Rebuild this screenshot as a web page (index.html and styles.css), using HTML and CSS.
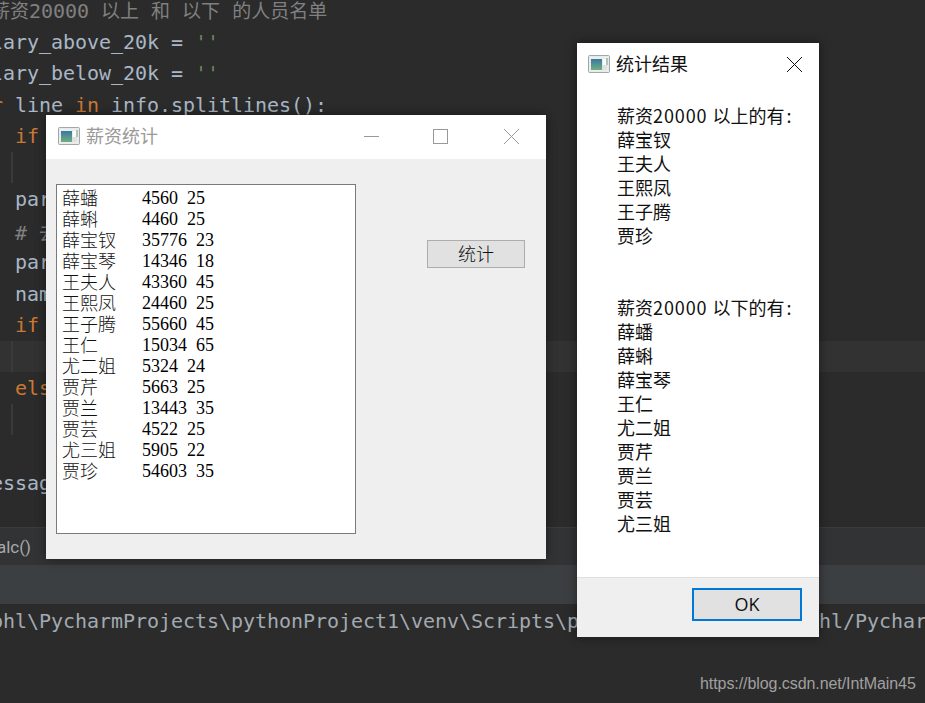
FILE: index.html
```html
<!DOCTYPE html>
<html lang="zh-CN">
<head>
<meta charset="utf-8">
<title>薪资统计</title>
<link rel="stylesheet" href="styles.css">
</head>
<body>
<svg class="defs" width="0" height="0" aria-hidden="true">
  <defs>
    <linearGradient id="qt-g" x1="0" y1="0" x2="0" y2="1">
      <stop offset="0" stop-color="#3a78a6"/>
      <stop offset="1" stop-color="#6fae7c"/>
    </linearGradient>
    <symbol id="qt-icon" viewBox="0 0 22 18">
      <rect x="0.5" y="0.5" width="21" height="17" rx="1" fill="#e9ebea" stroke="#a3a7a7"/>
      <rect x="2" y="2" width="18" height="14" fill="#eceeed"/>
      <rect x="3" y="4" width="11" height="11" fill="url(#qt-g)"/>
      <rect x="15" y="4" width="3" height="6" fill="#fbfbfb"/>
      <rect x="18.5" y="3" width="1" height="7" fill="#6d9a86"/>
      <rect x="14" y="10" width="5" height="5" fill="#dfe1e0"/>
    </symbol>
  </defs>
</svg>

<main class="ide">
  <section class="editor">
    <div class="ln ln-comment"><span class="cm"># <span class="cjk">薪资</span>20000 <span class="cjk">以上</span> <span class="cjk">和</span> <span class="cjk">以下</span> <span class="cjk">的人员名单</span></span></div>
    <div class="ln">salary_above_20k = <span class="st">''</span></div>
    <div class="ln">salary_below_20k = <span class="st">''</span></div>
    <div class="ln"><span class="kw">for</span> line <span class="kw">in</span> info.splitlines():</div>
    <div class="ln i1"><span class="kw">if</span></div>
    <div class="ln guide"></div>
    <div class="ln i1">parts</div>
    <div class="ln i1"><span class="cm"># <span class="cjk">去</span></span></div>
    <div class="ln i1">parts</div>
    <div class="ln i1">name</div>
    <div class="ln i1"><span class="kw">if</span></div>
    <div class="ln guide current"></div>
    <div class="ln i1"><span class="kw">else</span></div>
    <div class="ln guide"></div>
    <div class="ln"></div>
    <div class="ln">QMessage</div>
    <div class="ln"></div>
  </section>
  <div class="crumb">calc()</div>
  <div class="toolbar"></div>
  <section class="terminal">
    <div class="term-line">C:\Users\phl\PycharmProjects\pythonProject1\venv\Scripts\python.exe C:/Users/phl/PycharmProjects/pythonProject1</div>
  </section>
</main>

<div class="window win-main">
  <header class="titlebar">
    <svg class="app-icon"><use href="#qt-icon"/></svg>
    <span class="title title-dim">薪资统计</span>
    <div class="controls">
      <svg class="ctl" viewBox="0 0 15 15"><path d="M0 7.5H15" stroke="#999" fill="none"/></svg>
      <svg class="ctl" viewBox="0 0 15 15"><rect x="0.5" y="0.5" width="14" height="14" stroke="#999" fill="none"/></svg>
      <svg class="ctl ctl-close" viewBox="0 0 15 15"><path d="M0 0L15 15M15 0L0 15" stroke="#999" fill="none"/></svg>
    </div>
  </header>
  <div class="main-body">
    <div class="textbox">
      <div class="row"><span class="name">薛蟠</span><span class="nums">4560 25</span></div>
      <div class="row"><span class="name">薛蝌</span><span class="nums">4460 25</span></div>
      <div class="row"><span class="name">薛宝钗</span><span class="nums">35776 23</span></div>
      <div class="row"><span class="name">薛宝琴</span><span class="nums">14346 18</span></div>
      <div class="row"><span class="name">王夫人</span><span class="nums">43360 45</span></div>
      <div class="row"><span class="name">王熙凤</span><span class="nums">24460 25</span></div>
      <div class="row"><span class="name">王子腾</span><span class="nums">55660 45</span></div>
      <div class="row"><span class="name">王仁</span><span class="nums">15034 65</span></div>
      <div class="row"><span class="name">尤二姐</span><span class="nums">5324 24</span></div>
      <div class="row"><span class="name">贾芹</span><span class="nums">5663 25</span></div>
      <div class="row"><span class="name">贾兰</span><span class="nums">13443 35</span></div>
      <div class="row"><span class="name">贾芸</span><span class="nums">4522 25</span></div>
      <div class="row"><span class="name">尤三姐</span><span class="nums">5905 22</span></div>
      <div class="row"><span class="name">贾珍</span><span class="nums">54603 35</span></div>
    </div>
    <button class="btn-stat" type="button">统计</button>
  </div>
</div>

<div class="window win-dialog">
  <header class="titlebar titlebar-dialog">
    <svg class="app-icon"><use href="#qt-icon"/></svg>
    <span class="title">统计结果</span>
    <svg class="ctl dialog-close" viewBox="0 0 15 15"><path d="M0 0L15 15M15 0L0 15" stroke="#111" fill="none"/></svg>
  </header>
  <div class="dialog-body">
    <p>薪资<span class="wide">20000 </span>以上的有<span class="colon">:</span></p>
    <p>薛宝钗</p>
    <p>王夫人</p>
    <p>王熙凤</p>
    <p>王子腾</p>
    <p>贾珍</p>
    <p class="blank"></p>
    <p class="blank"></p>
    <p>薪资<span class="wide">20000 </span>以下的有<span class="colon">:</span></p>
    <p>薛蟠</p>
    <p>薛蝌</p>
    <p>薛宝琴</p>
    <p>王仁</p>
    <p>尤二姐</p>
    <p>贾芹</p>
    <p>贾兰</p>
    <p>贾芸</p>
    <p>尤三姐</p>
  </div>
  <footer class="dialog-foot">
    <button class="btn-ok" type="button">OK</button>
  </footer>
</div>

<div class="watermark">https://blog.csdn.net/IntMain45</div>
</body>
</html>
```
FILE: styles.css
```css
* { box-sizing: border-box; }
html, body { margin: 0; padding: 0; }
body {
  position: relative;
  width: 925px;
  height: 703px;
  overflow: hidden;
  background: #2b2b2b;
  font-family: "Noto Sans CJK SC", sans-serif;
}
.defs { position: absolute; }

.ide { display: flex; flex-direction: column; height: 703px; }

.editor {
  height: 533px;
  margin-top: -6px;
  flex: none;
  overflow: hidden;
  font-family: "DejaVu Sans Mono", "Noto Sans CJK SC", monospace;
  font-size: 20px;
  letter-spacing: -0.04px;
  color: #a9b7c6;
}
.ln {
  height: 31.5px;
  line-height: 33px;
  margin-left: -33px;
  padding-left: 0;
  white-space: pre;
}
.ln-comment { line-height: 31px; }
.i1 { padding-left: 48px; }
.guide { position: relative; margin-left: 0; padding-left: 11px; }
.guide::before {
  content: "";
  display: block;
  width: 2px;
  height: 100%;
  background: #3a3a3a;
}
.current { background: #323232; }
.kw { color: #cc7832; }
.st { color: #6a8759; }
.cm { color: #808080; }
.cjk { font-family: "Noto Sans CJK SC", sans-serif; font-size: 19px; letter-spacing: 0; }

.crumb {
  height: 38px;
  flex: none;
  margin-left: -12px;
  background: #313335;
  border-top: 1px solid #3a3c3e;
  font-family: "Roboto", sans-serif;
  font-size: 17px;
  line-height: 38px;
  color: #a9a9a9;
}
.toolbar { height: 39px; flex: none; background: #3c3f41; }
.terminal { flex: 1; overflow: hidden; }
.term-line {
  margin-left: -117px;
  margin-top: 2px;
  height: 30px;
  line-height: 30px;
  font-family: "DejaVu Sans Mono", monospace;
  font-size: 20px;
  letter-spacing: -0.04px;
  white-space: pre;
  color: #a2aab1;
}

.window {
  position: absolute;
  display: flex;
  flex-direction: column;
  background: #efefef;
  box-shadow: 0 0 10px rgba(0, 0, 0, 0.45);
}
.win-main { left: 46px; top: 115px; width: 500px; height: 444px; }
.win-dialog { left: 577px; top: 43px; width: 242px; height: 594px; }

.titlebar {
  display: flex;
  align-items: center;
  flex: none;
  height: 44px;
  padding-left: 12px;
  padding-bottom: 1px;
  background: #fff;
}
.titlebar-dialog { height: 43px; padding-left: 11px; padding-right: 17px; padding-bottom: 0; }
.app-icon { display: block; width: 22px; height: 18px; flex: none; margin-right: 6px; margin-bottom: 2px; }
.title { font-size: 18px; line-height: 24px; color: #111; margin-bottom: 3px; }
.title-dim { color: #999; }
.controls { display: flex; align-items: center; gap: 54px; margin-left: auto; margin-right: 27px; }
.ctl { display: block; width: 15px; height: 15px; flex: none; }
.ctl-close { margin-left: 2px; }
.dialog-close { margin-left: auto; }

.main-body {
  flex: 1;
  display: flex;
  align-items: flex-start;
  padding: 25px 0 0 10px;
}
.textbox {
  width: 300px;
  height: 350px;
  padding: 3px 0 0 5px;
  background: #fff;
  border: 1px solid #7a7a7a;
  color: #111;
  font-size: 18px;
}
.row { display: flex; height: 21px; line-height: 21px; white-space: pre; }
.name { width: 80px; flex: none; margin-top: -1px; font-family: "Noto Sans CJK SC", sans-serif; font-weight: 300; }
.nums { font-family: "Liberation Serif", serif; color: #000; word-spacing: 4.5px; }

.btn-stat {
  width: 98px;
  height: 28px;
  margin: 56px 0 0 71px;
  padding: 0 0 2px;
  background: #e1e1e1;
  border: 1px solid #adadad;
  border-radius: 0;
  font-family: "Noto Sans CJK SC", sans-serif;
  font-weight: 300;
  font-size: 18px;
  line-height: 24px;
  color: #111;
}

.dialog-body {
  flex: 1;
  padding: 17px 0 0 40px;
  background: #fff;
  color: #111;
  font-size: 18px;
}
.dialog-body p { margin: 0; height: 24px; line-height: 24px; white-space: pre; }
.wide { letter-spacing: 0.9px; }
.colon { margin-left: 2px; }
.dialog-foot {
  display: flex;
  justify-content: flex-end;
  flex: none;
  height: 60px;
  padding: 10px 17px 0 0;
  background: #efefef;
  border-top: 1px solid #dfdfdf;
}
.btn-ok {
  width: 110px;
  height: 33px;
  padding: 0 0 2px;
  background: #e1e1e1;
  border: 2px solid #0078d7;
  border-radius: 0;
  font-family: "Open Sans", sans-serif;
  font-size: 18px;
  line-height: 24px;
  color: #111;
}

.watermark {
  position: absolute;
  left: 700px;
  top: 674px;
  font-family: "Liberation Sans", sans-serif;
  font-size: 16px;
  letter-spacing: -0.07px;
  line-height: 20px;
  color: #a0a0a0;
  white-space: nowrap;
}
```
